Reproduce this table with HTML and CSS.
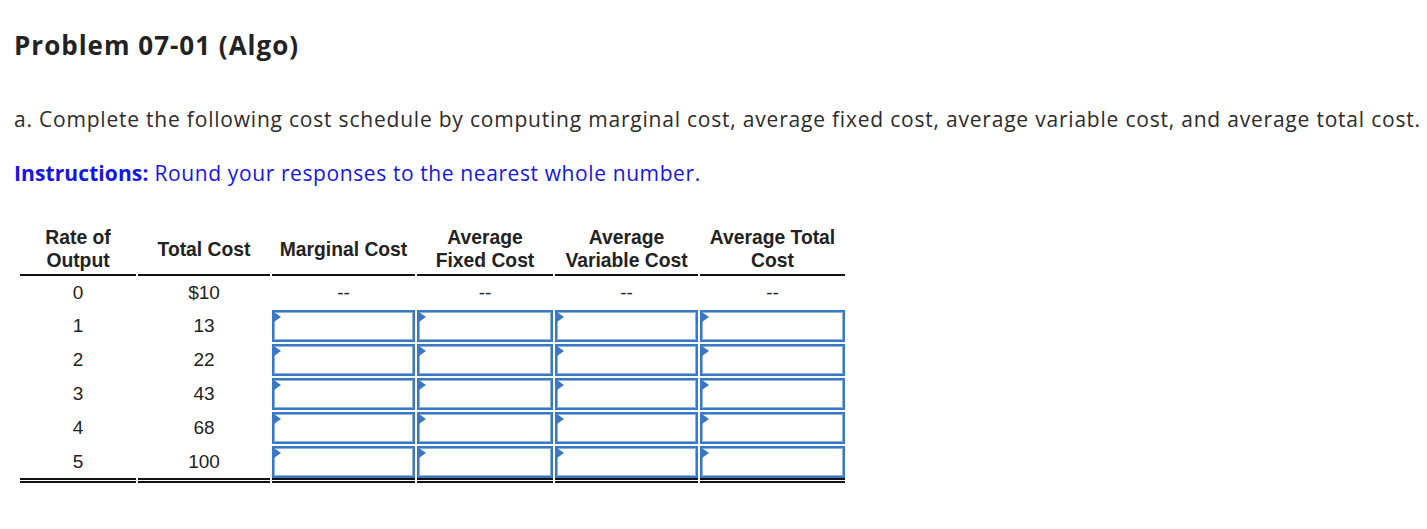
FILE: index.html
```html
<!DOCTYPE html>
<html lang="en">
<head>
<meta charset="utf-8">
<title>Problem 07-01 (Algo)</title>
<link rel="stylesheet" href="styles.css">
</head>
<body>
<div class="page">
  <h1 class="title">Problem 07-01 (Algo)</h1>
  <p class="question">a. Complete the following cost schedule by computing marginal cost, average fixed cost, average variable cost, and average total cost.</p>
  <p class="instructions"><strong>Instructions:</strong> Round your responses to the nearest whole number.</p>
  <table class="schedule">
    <colgroup>
      <col class="c1"><col class="c2"><col class="c3"><col class="c4"><col class="c5"><col class="c6">
    </colgroup>
    <thead>
      <tr>
        <th>Rate of<br>Output</th>
        <th>Total Cost</th>
        <th>Marginal Cost</th>
        <th>Average<br>Fixed Cost</th>
        <th>Average<br>Variable Cost</th>
        <th>Average Total<br>Cost</th>
      </tr>
    </thead>
    <tbody>
      <tr class="first">
        <td>0</td><td>$10</td><td>--</td><td>--</td><td>--</td><td>--</td>
      </tr>
      <tr>
        <td>1</td><td>13</td>
        <td class="in"><span class="box"></span></td><td class="in"><span class="box"></span></td><td class="in"><span class="box"></span></td><td class="in"><span class="box"></span></td>
      </tr>
      <tr>
        <td>2</td><td>22</td>
        <td class="in"><span class="box"></span></td><td class="in"><span class="box"></span></td><td class="in"><span class="box"></span></td><td class="in"><span class="box"></span></td>
      </tr>
      <tr>
        <td>3</td><td>43</td>
        <td class="in"><span class="box"></span></td><td class="in"><span class="box"></span></td><td class="in"><span class="box"></span></td><td class="in"><span class="box"></span></td>
      </tr>
      <tr>
        <td>4</td><td>68</td>
        <td class="in"><span class="box"></span></td><td class="in"><span class="box"></span></td><td class="in"><span class="box"></span></td><td class="in"><span class="box"></span></td>
      </tr>
      <tr class="last">
        <td>5</td><td>100</td>
        <td class="in"><span class="box"></span></td><td class="in"><span class="box"></span></td><td class="in"><span class="box"></span></td><td class="in"><span class="box"></span></td>
      </tr>
    </tbody>
  </table>
</div>
</body>
</html>
```

FILE: styles.css
```css
html, body {
  margin: 0;
  padding: 0;
  background: #fff;
}

.page {
  padding: 26px 0 0 14px;
  font-family: "Open Sans", "Lato", sans-serif;
  color: #2b2b2b;
}

.title {
  margin: 0;
  font-size: 26px;
  font-weight: 700;
  letter-spacing: 1px;
  line-height: 38px;
  color: #222;
}

.question {
  margin: 40px 0 0 0;
  font-size: 21px;
  letter-spacing: 0.79px;
  line-height: 30px;
  white-space: nowrap;
}

.instructions {
  margin: 24px 0 0 0;
  font-size: 21px;
  letter-spacing: 0.6px;
  line-height: 30px;
  color: #1515e6;
  white-space: nowrap;
}

.instructions strong {
  font-weight: 700;
  letter-spacing: 0.1px;
}

.schedule {
  margin: 36px 0 0 4px;
  border-collapse: separate;
  border-spacing: 2px;
  table-layout: fixed;
  font-family: "Liberation Sans", Arial, sans-serif;
  font-size: 19px;
  color: #222;
}

.c1 { width: 116px; }
.c2 { width: 132px; }
.c3 { width: 143px; }
.c4 { width: 136px; }
.c5 { width: 143px; }
.c6 { width: 145px; }

.schedule th {
  font-weight: 700;
  font-size: 19.3px;
  line-height: 23px;
  padding: 0 0 2px 0;
  vertical-align: middle;
  text-align: center;
  border-bottom: 2px solid #111;
}

.schedule td {
  text-align: center;
  padding: 0;
  height: 32px;
  line-height: 32px;
}

.schedule tr.first td {
  height: 30px;
  line-height: 30px;
}

.schedule tr.last td {
  border-bottom: 5px double #111;
}

.schedule td.in {
  vertical-align: top;
}

.box {
  position: relative;
  display: block;
  box-sizing: border-box;
  height: 32px;
  border: 2px solid #3b78c3;
  box-shadow: inset 0 0 0 1px #8fb2dd;
  background: #fff;
}

.box::before {
  content: "";
  position: absolute;
  left: 0;
  top: 0;
  width: 0;
  height: 0;
  border-top: 5px solid transparent;
  border-bottom: 5px solid transparent;
  border-left: 7px solid #3b78c3;
}
```
